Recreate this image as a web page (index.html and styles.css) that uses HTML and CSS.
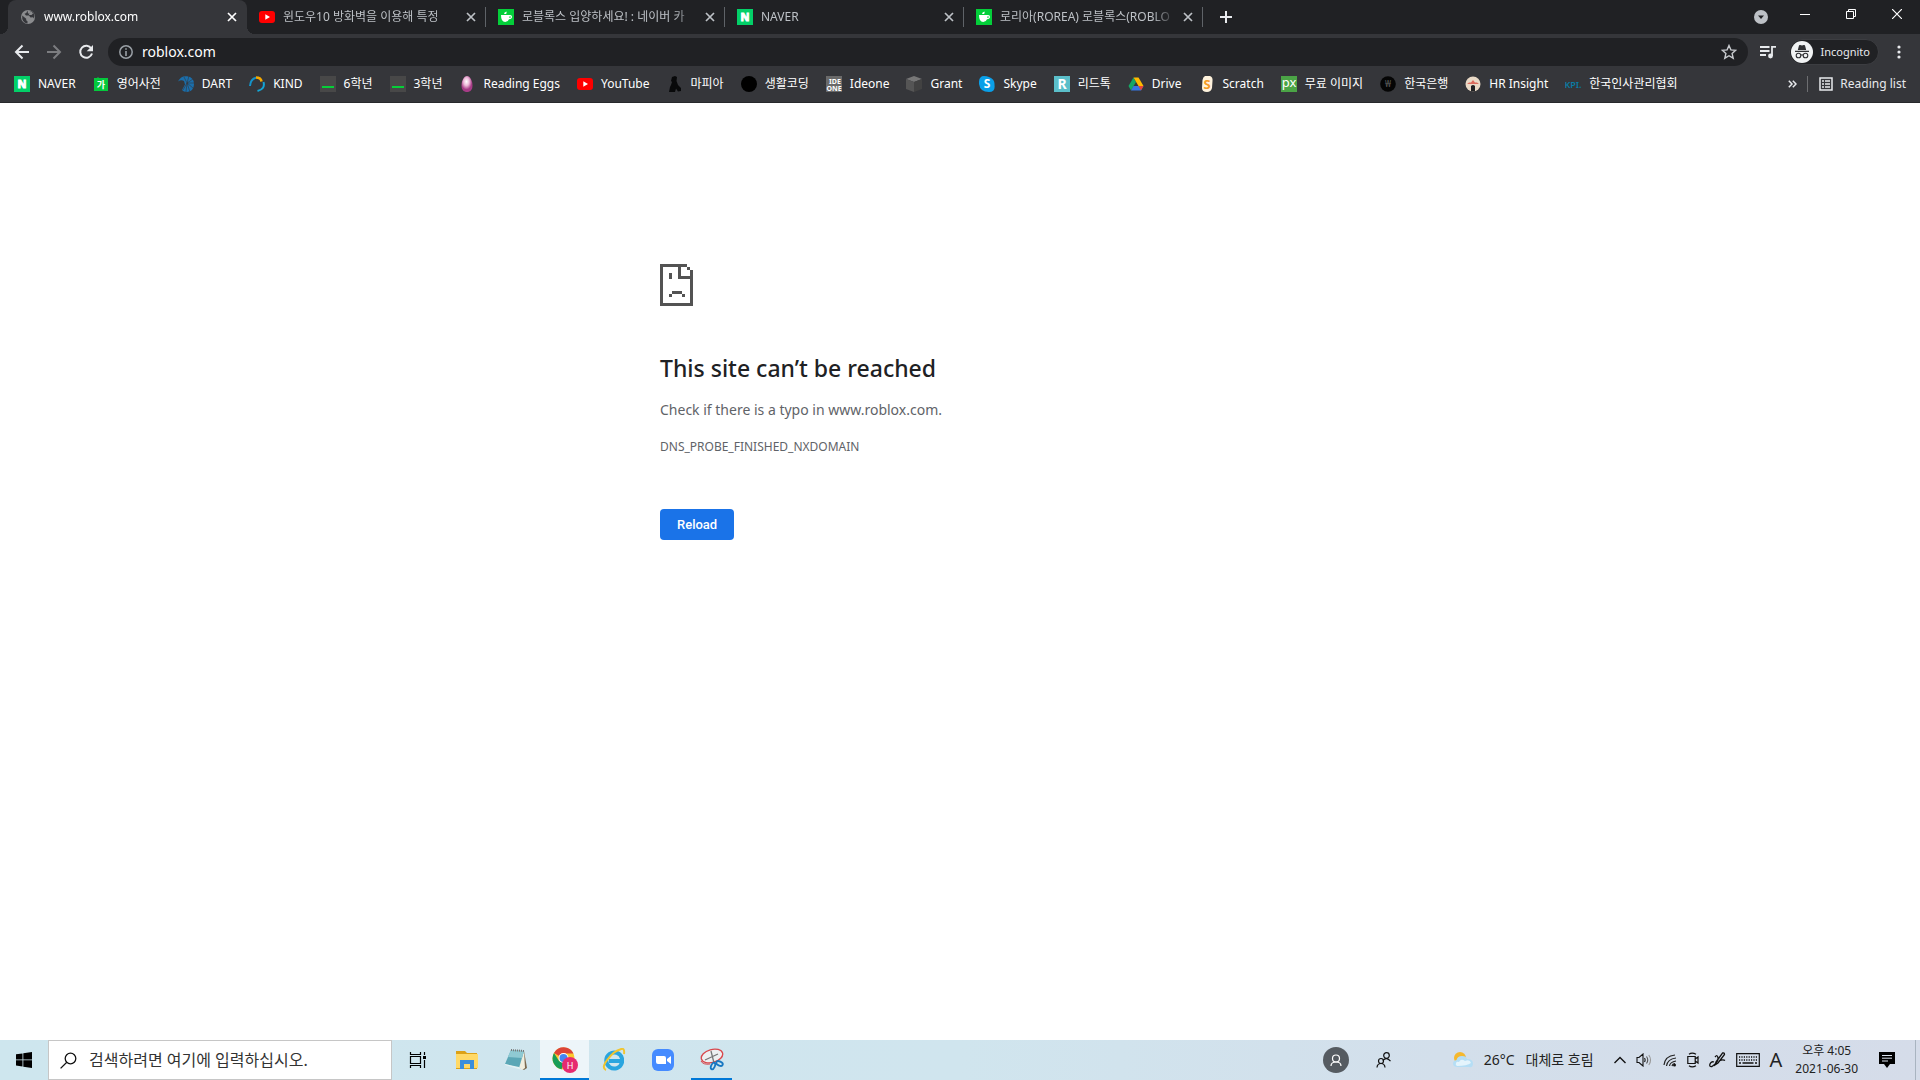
FILE: index.html
```html
<!DOCTYPE html>
<html lang="ko">

<head>
    <meta charset="UTF-8">
    <meta name="viewport" content="width=device-width,initial-scale=1">
    <link rel="stylesheet" href="styles.css">
    <title>www.roblox.com</title>
</head>

<body>
    <svg class="defs" aria-hidden="true">
        <symbol id="i-close" viewBox="0 0 10 10"><path d="M1 1l8 8M9 1L1 9" fill="none" stroke="currentColor" stroke-width="1.700"/></symbol>
        <symbol id="i-youtube" viewBox="0 0 16 16"><rect y="2" width="16" height="12" rx="3" fill="#f00"/><path d="M6.300 5.300L11 8l-4.700 2.700z" fill="#fff"/></symbol>
        <symbol id="i-naver" viewBox="0 0 16 16"><rect width="16" height="16" fill="#03d068"/><text x="8" y="12" text-anchor="middle" class="mark" font-size="11" stroke="#fff">N</text></symbol>
        <symbol id="i-cafe" viewBox="0 0 16 16"><rect width="16" height="16" fill="#04cf3a"/><path d="M3 6h8.500q2.500-.3 2.500 1.800T11 10.200Q10 13 7.200 13 3 13 3 6z" fill="#fff"/><path d="M6 5q0-2 2.500-2.500Q9 4 8 5z" fill="#fff"/><path d="M11.500 7.200q1.300-.2 1.300.7t-1.500 1z" fill="#04cf3a"/></symbol>
        <symbol id="i-class" viewBox="0 0 16 16"><rect width="16" height="16" fill="#484848"/><rect x="2" y="10" width="12" height="2" fill="#06cf38"/></symbol>
    </svg>

    <header class="browser">
        <div class="tabstrip">
            <div class="tab active">
                <svg class="favicon" viewBox="0 0 16 16"><circle cx="8" cy="8" r="7" fill="#8b8c8e"/><path d="M2.200 6.500l4 3.300v1.400l1.300 1v2.300Q1.500 13.500 2.200 6.500zM7.500 1.500L6.300 4 4.500 4.700 6 6.500h3l1.500 2 2.500-.3 1 1.300Q15.500 4 11 2L9.500 4.500H8z" fill="#35363a"/><path d="M9.500 3.500l2-1 1.500 2-1.500 1.500H9z" fill="#8b8c8e"/></svg>
                <span class="tab-title">www.roblox.com</span>
                <button class="tab-close" aria-label="Close"><svg><use href="#i-close"/></svg></button>
            </div>
            <div class="tab">
                <svg class="favicon"><use href="#i-youtube"/></svg>
                <span class="tab-title">윈도우10 방화벽을 이용해 특정</span>
                <button class="tab-close" aria-label="Close"><svg><use href="#i-close"/></svg></button>
            </div>
            <div class="tab">
                <svg class="favicon"><use href="#i-cafe"/></svg>
                <span class="tab-title">로블록스 입양하세요! : 네이버 카</span>
                <button class="tab-close" aria-label="Close"><svg><use href="#i-close"/></svg></button>
            </div>
            <div class="tab">
                <svg class="favicon"><use href="#i-naver"/></svg>
                <span class="tab-title">NAVER</span>
                <button class="tab-close" aria-label="Close"><svg><use href="#i-close"/></svg></button>
            </div>
            <div class="tab">
                <svg class="favicon"><use href="#i-cafe"/></svg>
                <span class="tab-title">로리아(ROREA) 로블록스(ROBLO</span>
                <button class="tab-close" aria-label="Close"><svg><use href="#i-close"/></svg></button>
            </div>
            <button class="new-tab" aria-label="New tab"><svg width="12" height="12" viewBox="0 0 12 12"><path d="M6 0v12M0 6h12" stroke="#e8eaed" stroke-width="2"/></svg></button>
            <div class="window-controls">
                <button class="tab-search" aria-label="Search tabs"><svg width="14" height="14" viewBox="0 0 14 14"><circle cx="7" cy="7" r="7" fill="#bdc1c6"/><path d="M4 5.500h6L7 9z" fill="#202124"/></svg></button>
                <button aria-label="Minimize"><svg width="10" height="10" viewBox="0 0 10 10"><path d="M0 5.500h10" stroke="#fff"/></svg></button>
                <button aria-label="Restore"><svg width="10" height="10" viewBox="0 0 10 10"><path d="M.5 2.500h7v7h-7zM2.500 2.500v-2h7v7h-2" fill="none" stroke="#fff"/></svg></button>
                <button aria-label="Close window"><svg width="10" height="10" viewBox="0 0 10 10"><path d="M0 0l10 10M10 0L0 10" stroke="#fff" stroke-width="1.200"/></svg></button>
            </div>
        </div>

        <div class="toolbar">
            <button class="tool" aria-label="Back"><svg width="16" height="16" viewBox="0 0 16 16"><path d="M15 8H2.500M8.500 1.500L2 8l6.500 6.500" fill="none" stroke="#e8eaed" stroke-width="2"/></svg></button>
            <button class="tool" aria-label="Forward"><svg width="16" height="16" viewBox="0 0 16 16"><path d="M1 8h12.500M7.500 1.500L14 8l-6.500 6.500" fill="none" stroke="#7c7d80" stroke-width="2"/></svg></button>
            <button class="tool" aria-label="Reload page"><svg width="16" height="16" viewBox="0 0 16 16"><path d="M13.300 4.500A6 6 0 1 0 14 9.500" fill="none" stroke="#e8eaed" stroke-width="2"/><path d="M15 1v6.300H8.700z" fill="#e8eaed"/></svg></button>
            <div class="omnibox">
                <svg width="14" height="14" viewBox="0 0 14 14"><circle cx="7" cy="7" r="6.200" fill="none" stroke="#9aa0a6" stroke-width="1.500"/><path d="M7 3.200v1.600M7 6v5" stroke="#9aa0a6" stroke-width="1.600"/></svg>
                <input type="text" value="roblox.com" aria-label="Address">
                <button aria-label="Bookmark this tab"><svg width="16" height="16" viewBox="0 0 16 16"><path d="M8 1.500l1.900 4.400 4.800.4-3.600 3.200 1.100 4.700L8 11.700l-4.200 2.500 1.100-4.700L1.300 6.300l4.800-.4z" fill="none" stroke="#c8cbcf" stroke-width="1.400"/></svg></button>
            </div>
            <button class="media" aria-label="Media"><svg width="16" height="14" viewBox="0 0 16 14"><path d="M0 2h9.500M0 6h9.500M0 10h6" stroke="#e8eaed" stroke-width="2"/><path d="M12 11V1.900h4" fill="none" stroke="#e8eaed" stroke-width="1.800"/><circle cx="10.500" cy="11" r="2.400" fill="#e8eaed"/></svg></button>
            <button class="incognito">
                <svg width="22" height="22" viewBox="0 0 22 22"><circle cx="11" cy="11" r="11" fill="#f1f3f4"/><path d="M6.800 9L8 4.500q.3-.8 1.200-.5l1.800.5 1.800-.5q.9-.3 1.200.5L15.200 9zM4 9.800h14v1.300H4z" fill="#303134"/><g fill="none" stroke="#303134" stroke-width="1.100"><circle cx="7.500" cy="14.500" r="2.300"/><circle cx="14.500" cy="14.500" r="2.300"/><path d="M9.800 14.200q1.200-.8 2.400 0"/></g></svg>
                Incognito
            </button>
            <button class="menu" aria-label="Menu"><svg width="4" height="14" viewBox="0 0 4 14" fill="#e8eaed"><circle cx="2" cy="2" r="1.600"/><circle cx="2" cy="7" r="1.600"/><circle cx="2" cy="12" r="1.600"/></svg></button>
        </div>

        <nav class="bookmarks">
            <a href="#"><svg><use href="#i-naver"/></svg>NAVER</a>
            <a href="#"><svg viewBox="0 0 16 16"><path d="M1 2h3l1-1 1 1h9v13H1z" fill="#04c93c"/><text x="8" y="12" text-anchor="middle" class="mark" font-size="9">가</text></svg>영어사전</a>
            <a href="#"><svg viewBox="0 0 16 16"><path d="M0 5.500Q3-.5 9 .3q7 1 7 7.700 0 7-7 8-3.500 0-5-2L7 8.500 6 5Q3 3.500 0 5.500z" fill="#1a6eab"/><path d="M9 7L5 14M9 7L8 16M9 7l3 9M9 7l6 5M9 7h7M9 7l6-4M9 7l2-7M9 7L6 1" stroke="#35363a" stroke-width=".6"/></svg>DART</a>
            <a href="#"><svg viewBox="0 0 16 16" fill="none" stroke-width="2"><path d="M1 10Q1.500 3 7 1.800" stroke="#1593c9"/><path d="M7 1.500q5 0 5.500 4" stroke="#f5a900" stroke-width="2.600"/><path d="M14.500 6q2 7-6 9" stroke="#13a5d5"/></svg>KIND</a>
            <a href="#"><svg><use href="#i-class"/></svg>6학년</a>
            <a href="#"><svg><use href="#i-class"/></svg>3학년</a>
            <a href="#"><svg viewBox="0 0 16 16"><defs><radialGradient id="egg" cx=".45" cy=".35"><stop offset="0" stop-color="#fff"/><stop offset=".5" stop-color="#edb9d8"/><stop offset="1" stop-color="#a73c87"/></radialGradient></defs><path d="M8 0c3 0 5.500 5 5.500 9.500S11 16 8 16s-5.500-2-5.500-6.500S5 0 8 0z" fill="url(#egg)"/></svg>Reading Eggs</a>
            <a href="#"><svg><use href="#i-youtube"/></svg>YouTube</a>
            <a href="#"><svg viewBox="0 0 16 16"><path d="M5 1l3-1 2 1-.5 4 1.500 4 3 3v3l-3 .5-2-3-1 3.500H2l1-5 1-2 1-3-1-1z" fill="#08090a"/></svg>마피아</a>
            <a href="#"><svg viewBox="0 0 16 16"><circle cx="8" cy="8" r="8" fill="#000"/></svg>생활코딩</a>
            <a href="#"><svg viewBox="0 0 16 16"><rect width="16" height="16" fill="#6a6a6a"/><text x="9" y="8" text-anchor="middle" class="mark" font-size="7">IDE</text><text x="8" y="15" text-anchor="middle" class="mark" font-size="7">ONE</text></svg>Ideone</a>
            <a href="#"><svg viewBox="0 0 16 16"><path d="M8 0l8 3-8 3-8-3z" fill="#777"/><path d="M0 3l8 3v10l-8-3z" fill="#555"/><path d="M16 3L8 6v10l8-3z" fill="#424242"/></svg>Grant</a>
            <a href="#"><svg viewBox="0 0 16 16"><path d="M5 0q3 0 5 1 6 2 5.500 8 1 7-5.500 7-9 0-10-8Q-.5 0 5 0z" fill="#0a9fe8"/><text x="8" y="12" text-anchor="middle" class="mark" font-size="12">S</text></svg>Skype</a>
            <a href="#"><svg viewBox="0 0 16 16"><rect width="16" height="16" fill="#5bbfca"/><text x="8" y="13" text-anchor="middle" class="mark" font-size="14">R</text></svg>리드톡</a>
            <a href="#"><svg viewBox="0 0 16 16"><path d="M5.500 1.500L8 6l-5 8.500L.5 10z" fill="#16a765"/><path d="M5.500 1.500h5l5 8.500h-5z" fill="#ffba00"/><path d="M5.500 10h10L13 14.500H3z" fill="#3777e3"/><path d="M10.500 10h5L13 14.500z" fill="#e94435"/></svg>Drive</a>
            <a href="#"><svg viewBox="0 0 16 16"><path d="M6 0h5q3 1 2.500 5L13 12q-1 4-5 4-5 0-5-4l.5-8Q4 1 6 0z" fill="#fff3dd"/><text x="8" y="13" text-anchor="middle" class="scratch" font-size="13">S</text></svg>Scratch</a>
            <a href="#"><svg viewBox="0 0 16 16"><rect width="16" height="16" fill="#4ba446"/><text x="8" y="11" text-anchor="middle" class="thin" font-size="13">px</text></svg>무료 이미지</a>
            <a href="#"><svg viewBox="0 0 16 16"><circle cx="8" cy="8" r="7.800" fill="#050505"/><text x="8" y="11" text-anchor="middle" font-size="9" fill="#5c5c5c">₩</text></svg>한국은행</a>
            <a href="#"><svg viewBox="0 0 16 16"><circle cx="8" cy="8" r="7.500" fill="#e9d9c6"/><path d="M2 8l2-1.500h2L8 4l2 2.500h2L14 8z" fill="#db6a5c"/><path d="M6 15.500V10q2-2 4 0v5.500z" fill="#202124"/></svg>HR Insight</a>
            <a href="#"><svg viewBox="0 0 16 16"><text x="8" y="12" text-anchor="middle" font-size="9" font-weight="600" fill="#0a7ba5">KPI.</text></svg>한국인사관리협회</a>
            <div class="bookmarks-end">
                <button class="more" aria-label="More bookmarks"><svg width="9" height="8" viewBox="0 0 9 8"><path d="M.8.800L4 4 .8 7.200M4.800.8L8 4 4.800 7.200" fill="none" stroke="#e8eaed" stroke-width="1.500"/></svg></button>
                <button class="reading-list"><svg width="14" height="14" viewBox="0 0 14 14"><path d="M1 1h12v12H1z" fill="none" stroke="#e8eaed" stroke-width="1.500"/><path d="M3 4h2M6 4h5M3 7h2M6 7h5M3 10h2M6 10h5" stroke="#e8eaed" stroke-width="1.500"/></svg>Reading list</button>
            </div>
        </nav>
    </header>

    <main class="page">
        <div class="error">
            <svg class="error-icon" width="33" height="42" viewBox="0 0 33 42" fill="#535353" shape-rendering="crispEdges"><path d="M0 0h27v3H3v36h27V15H18V0h3v12h9V6h3v36H0zM27 3h3v3h-3zM9 9h3v6H9zM12 27h10v3H12zM9 30h3v3H9zM22 30h3v3h-3z"/></svg>
            <h1>This site can’t be reached</h1>
            <p>Check if there is a typo in www.roblox.com.</p>
            <div class="error-code">DNS_PROBE_FINISHED_NXDOMAIN</div>
            <button class="reload">Reload</button>
        </div>
    </main>

    <footer class="taskbar">
        <button class="start" aria-label="Start"><svg width="16" height="16" viewBox="0 0 16 16"><path d="M0 2.300l6.500-.9v6.100H0zM7.300 1.200L16 0v7.500H7.300zM0 8.300h6.500v6.200L0 13.600zM7.300 8.300H16V16l-8.700-1.300z"/></svg></button>
        <label class="search">
            <svg width="17" height="17" viewBox="0 0 17 17"><circle cx="10.500" cy="6.500" r="5.300" fill="none" stroke="#111" stroke-width="1.300"/><path d="M6.800 10.300L.6 16.400" stroke="#111" stroke-width="1.300"/></svg>
            <input type="text" placeholder="검색하려면 여기에 입력하십시오." aria-label="검색">
        </label>
        <div class="apps">
            <button aria-label="Task view"><svg width="18" height="16" viewBox="0 0 18 16"><path d="M1.500 4.500h10v7h-10zM1.500 0v2.500h10V0M1.500 16v-2.500h10V16M15.500 0v3M15.500 8v8" fill="none" stroke="#000" stroke-width="1.200"/><path d="M14 4h3v3h-3z"/></svg></button>
            <button aria-label="File Explorer"><svg width="22" height="20" viewBox="0 0 22 20"><path d="M0 1h9l2 2h10v16H0z" fill="#dca117"/><path d="M0 4h22v14H0z" fill="#ffd967"/><path d="M4 10h14v9h-4v-5H8v5H4z" fill="#3b8edb"/></svg></button>
            <button aria-label="Notepad"><svg width="24" height="24" viewBox="0 0 24 24"><path d="M20 3l3 17-3 2-4-2z" fill="#7c6a50"/><path d="M20 3l1 17-3 2-3-3z" fill="#f1eede"/><path d="M7 2l13 1-5 17L1 16z" fill="#5ba7b6"/><path d="M7 2l13 1-2 7L4 9z" fill="#8fcad3"/><path d="M7 2l13 1" stroke="#777" stroke-width="2" stroke-dasharray="1 1"/><path d="M1 16l14 3 3 3-17-5z" fill="#e4f2f4"/></svg></button>
            <button class="current" aria-label="Google Chrome"><svg width="26" height="26" viewBox="0 0 26 26"><circle cx="11.500" cy="11.500" r="11" fill="#fbc82d"/><path d="M11.500 11.500L2 6A11 11 0 0 1 21.500 6.500H11.500z" fill="#dc4437"/><path d="M2 6l5 8 5 2-2.500 6.300A11 11 0 0 1 2 6z" fill="#179d58"/><circle cx="11.500" cy="11" r="5" fill="#fff"/><circle cx="11.500" cy="11" r="4" fill="#4285f4"/><circle cx="18" cy="18" r="8" fill="#e62b70"/><text x="18" y="21.500" text-anchor="middle" font-size="9" fill="#fff">H</text></svg></button>
            <button aria-label="Internet Explorer"><svg width="24" height="24" viewBox="0 0 24 24"><path d="M20 14.500A8 8 0 1 1 20 10.500L20 13H7" fill="none" stroke="#29a5df" stroke-width="4"/><path d="M4 22Q-1 20 5.500 11.500T18 1.500Q23-1 22 6" fill="none" stroke="#f1c52f" stroke-width="2"/></svg></button>
            <button aria-label="Zoom"><svg width="22" height="22" viewBox="0 0 22 22"><rect width="22" height="22" rx="6" fill="#458bff"/><path d="M4 7h8q2 0 2 2v6H6q-2 0-2-2zM15 10l4-3v8l-4-3z" fill="#fff"/></svg></button>
            <button class="running" aria-label="Snipping Tool"><svg width="26" height="24" viewBox="0 0 26 24" fill="none"><ellipse cx="13" cy="8" rx="11" ry="6.500" transform="rotate(-16 13 8)" fill="#eef0f1" stroke="#d9474c" stroke-width="1.300"/><path d="M12 3l3 12M6 12l13-6" stroke="#777" stroke-width="1.300"/><path d="M2 13q2 4 9 3" stroke="#d9474c"/><ellipse cx="14" cy="18" rx="1.800" ry="3.500" transform="rotate(25 14 18)" stroke="#1777c2" stroke-width="1.800"/><ellipse cx="20.500" cy="15.500" rx="3.500" ry="2" transform="rotate(25 20.500 15.500)" stroke="#1777c2" stroke-width="1.800"/></svg></button>
        </div>
        <div class="tray">
            <button class="contact" aria-label="Contact"><svg width="26" height="26" viewBox="0 0 26 26"><circle cx="13" cy="13" r="13" fill="#555b61"/><g fill="none" stroke="#fff" stroke-width="1.200"><circle cx="13" cy="11.500" r="3.500"/><path d="M8 19q0-4 5-4t5 4"/></g></svg></button>
            <button class="people" aria-label="People"><svg width="16" height="16" viewBox="0 0 16 16" fill="none" stroke="#111" stroke-width="1.200"><circle cx="10.500" cy="3.500" r="2.800"/><path d="M6.800 8.500q3.700-4 7.700.700"/><circle cx="5" cy="9" r="2.500"/><path d="M1 15.500q.3-4 4-4t4 4"/></svg></button>
            <button class="weather">
                <svg width="20" height="18" viewBox="0 0 20 18"><circle cx="7" cy="7" r="6" fill="#f5b82e"/><path d="M4 16q-4-.5-4-3.500T3.500 9Q4.500 5 9 5t5 3q6 0 6 4.500t-4 3.500z" fill="#b5def5"/><path d="M4 15q-2-1-1-3t3-1q2-4 6-1 5-2 6 2-4 3-14 3z" fill="#e4f4fc"/></svg>
                <span>26°C</span><span>대체로 흐림</span>
            </button>
            <div class="tray-icons">
                <svg width="12" height="8" viewBox="0 0 12 8"><path d="M.5 7L6 1.500 11.500 7" fill="none" stroke="#111" stroke-width="1.400"/></svg>
                <svg width="17" height="14" viewBox="0 0 17 14" fill="none" stroke="#111" stroke-width="1.100"><path d="M1 4.500h2L7 1v12L3 9.500H1zM8.500 5q1.200 2 0 4"/><path d="M10.500 3.500q2.500 3.500 0 7" stroke="#555"/><path d="M12.800 2q3.500 5 0 10" stroke="#999"/></svg>
                <svg width="14" height="14" viewBox="0 0 14 14" fill="none" stroke="#222" stroke-width="1.200"><path d="M1 12Q2 3 12 2M3.500 13Q4.500 6 13 5M6.500 13Q7 9 13 8"/><circle cx="11.500" cy="12" r="1.500" fill="#111" stroke="none"/><path d="M9 13q.5-2.300 3-2.500"/></svg>
                <svg width="12" height="16" viewBox="0 0 12 16" fill="none" stroke="#111" stroke-width="1.200"><path d="M.8 4.500h7.400v7H.8zM8.200 7l2.800-2v6L8.200 9M2 2.300q3-2.300 7 0M2 13.700q3 2.300 7 0"/></svg>
                <svg width="17" height="16" viewBox="0 0 17 16" fill="none" stroke="#111" stroke-width="1.300"><path d="M7 10L13.500 1q2-.5 2 1.500L9 11l-3 2zM6 5Q8.500 2 9 6T3 14.500Q0 15 1 12t4-2M10 9q4-2 6-.5"/></svg>
                <svg width="24" height="14" viewBox="0 0 24 14"><path d="M.7.700h22.600v12.600H.7z" fill="none" stroke="#111" stroke-width="1.200"/><path d="M3 4h18M3 7h18" stroke="#111" stroke-width="1.300" stroke-dasharray="1.200 1.200"/><path d="M3 10h2M6.500 10h11M19 10h2" stroke="#111" stroke-width="1.300"/></svg>
                <span class="ime">A</span>
            </div>
            <time class="clock" datetime="2021-06-30T16:05"><span>오후 4:05</span><span>2021-06-30</span></time>
            <button class="notice" aria-label="Notifications"><svg width="16" height="16" viewBox="0 0 16 16"><path d="M0 0h16v12h-5l-3 4-3-4H0z"/><path d="M3 3.500h10M3 6.200h10M3 9h6" stroke="#dbe3ee"/></svg></button>
        </div>
    </footer>
</body>

</html>
```
FILE: styles.css
```css
*,
*::before,
*::after {
    box-sizing: border-box;
    padding: 0;
    margin: 0;
}

body {
    display: flex;
    flex-direction: column;
    height: 100vh;
    overflow: hidden;
    background: #fff;
    font: 12px/16px "Noto Sans", "Noto Sans CJK KR", sans-serif;
}

button,
input {
    border: none;
    outline: none;
    background: none;
    color: inherit;
    font: inherit;
}

button {
    display: flex;
    align-items: center;
    justify-content: center;
}

svg {
    display: block;
    flex: none;
}

.defs {
    position: absolute;
    width: 0;
    height: 0;
}

/* letters inside site icons */
.mark {
    fill: #fff;
    font-weight: 700;
}

.thin {
    fill: #fff;
}

.scratch {
    fill: #f59b25;
    font-weight: 700;
}

.browser {
    background: #35363a;
    color: #e8eaed;
    border-bottom: 1px solid #27282b;
}

/* tabs */
.tabstrip {
    display: flex;
    height: 34px;
    padding-left: 8px;
    background: #202124;
}

.tab {
    display: flex;
    align-items: center;
    flex: 0 1 239px;
    min-width: 0;
    padding: 0 7px 0 12px;
    color: #bdc1c6;
    background: linear-gradient(#5f6368, #5f6368) right center / 1px 20px no-repeat;
}

.tab.active {
    position: relative;
    background: #35363a;
    border-radius: 8px 8px 0 0;
    color: #fff;
}

.tab.active::before,
.tab.active::after {
    content: "";
    position: absolute;
    bottom: 0;
    width: 8px;
    height: 8px;
}

.tab.active::before {
    left: -8px;
    background: radial-gradient(circle at 0 0, #202124 8px, #35363a 8px);
}

.tab.active::after {
    right: -8px;
    background: radial-gradient(circle at 100% 0, #202124 8px, #35363a 8px);
}

.favicon {
    width: 16px;
    height: 16px;
}

.tab-title {
    flex: 1;
    min-width: 0;
    margin: 0 4px 0 8px;
    overflow: hidden;
    white-space: nowrap;
    mask-image: linear-gradient(to left, transparent, #000 24px);
}

.tab-close {
    width: 16px;
    height: 16px;
}

.tab-close svg {
    width: 10px;
    height: 10px;
}

.new-tab {
    width: 28px;
    margin-left: 9px;
}

.window-controls {
    display: flex;
    margin-left: auto;
    height: 28px;
}

.window-controls button {
    width: 46px;
}

.window-controls .tab-search {
    width: 42px;
    height: 34px;
}

/* toolbar */
.toolbar {
    display: flex;
    align-items: center;
    height: 36px;
    padding: 0 13px 0 6px;
}

.tool {
    width: 32px;
    height: 28px;
}

.omnibox {
    display: flex;
    flex: 1;
    align-items: center;
    height: 28px;
    margin-left: 6px;
    padding: 0 11px;
    border-radius: 14px;
    background: #202124;
}

.omnibox input {
    flex: 1;
    padding-left: 9px;
    color: #fff;
    font-size: 14px;
}

.media {
    width: 41px;
    height: 28px;
}

.incognito {
    gap: 8px;
    height: 26px;
    padding: 0 8px 0 1px;
    border-radius: 13px;
    border: 1px solid #3c3d41;
    background: #202124;
    font-size: 11px;
}

.menu {
    width: 16px;
    height: 28px;
    margin-left: 12px;
}

/* bookmarks */
.bookmarks {
    display: flex;
    align-items: center;
    gap: 17px;
    height: 32px;
    padding: 0 14px 4px;
    white-space: nowrap;
}

.bookmarks a {
    display: flex;
    align-items: center;
    gap: 8px;
    color: #fff;
    text-decoration: none;
}

.bookmarks a svg {
    width: 16px;
    height: 16px;
}

.bookmarks-end {
    display: flex;
    align-items: center;
    margin-left: auto;
}

.more {
    width: 20px;
    height: 16px;
    border-right: 1px solid #6d6e71;
    padding-right: 11px;
}

.reading-list {
    gap: 7px;
    padding-left: 11px;
}

/* error page */
.page {
    flex: 1;
    min-height: 0;
    overflow: hidden;
}

.error {
    max-width: 600px;
    margin: 161px auto 0;
    color: #5f6368;
}

.error h1 {
    margin-top: 46px;
    color: #202124;
    font-size: 23px;
    font-weight: 500;
    line-height: 32px;
}

.error p {
    margin-top: 14px;
    font-size: 14px;
    line-height: 24px;
}

.error-code {
    margin-top: 17px;
}

.reload {
    height: 31px;
    margin-top: 54px;
    padding: 0 17px;
    border-radius: 4px;
    background: #1a73e8;
    color: #fff;
    font: 500 13px/16px Roboto, sans-serif;
}

/* taskbar */
.taskbar {
    display: flex;
    height: 40px;
    background: linear-gradient(90deg, #cee6ee, #d0e5ee 50%, #d3dfeb 75%, #d5dce9);
    color: #222;
}

.start {
    width: 48px;
}

.search {
    display: flex;
    align-items: center;
    width: 344px;
    gap: 12px;
    padding-left: 11px;
    border: 1px solid #c6c6c6;
    background: #fff;
}

.search input {
    flex: 1;
    font-size: 16px;
}

.search input::placeholder {
    color: #333;
}

.apps {
    display: flex;
    padding-left: 1px;
}

.apps button {
    position: relative;
    width: 49px;
}

.apps .current {
    background: #edf5f9;
}

.apps .current::after,
.apps .running::after {
    content: "";
    position: absolute;
    left: 0;
    right: 0;
    bottom: 0;
    height: 2px;
    background: #0078d7;
}

.apps .running::after {
    left: 4px;
    right: 4px;
}

.tray {
    display: flex;
    align-items: center;
    margin-left: auto;
}

.contact,
.people {
    width: 48px;
    height: 40px;
}

.weather {
    gap: 11px;
    margin-left: 45px;
    font-size: 14px;
}

.tray-icons {
    display: flex;
    align-items: center;
    gap: 10px;
    margin-left: 20px;
}

.ime {
    font-size: 20px;
}

.clock {
    display: flex;
    flex-direction: column;
    margin-left: 13px;
    text-align: center;
    line-height: 18px;
}

.notice {
    width: 58px;
    height: 40px;
    margin-right: 4px;
    border-right: 1px solid #a9b4c0;
}
```
